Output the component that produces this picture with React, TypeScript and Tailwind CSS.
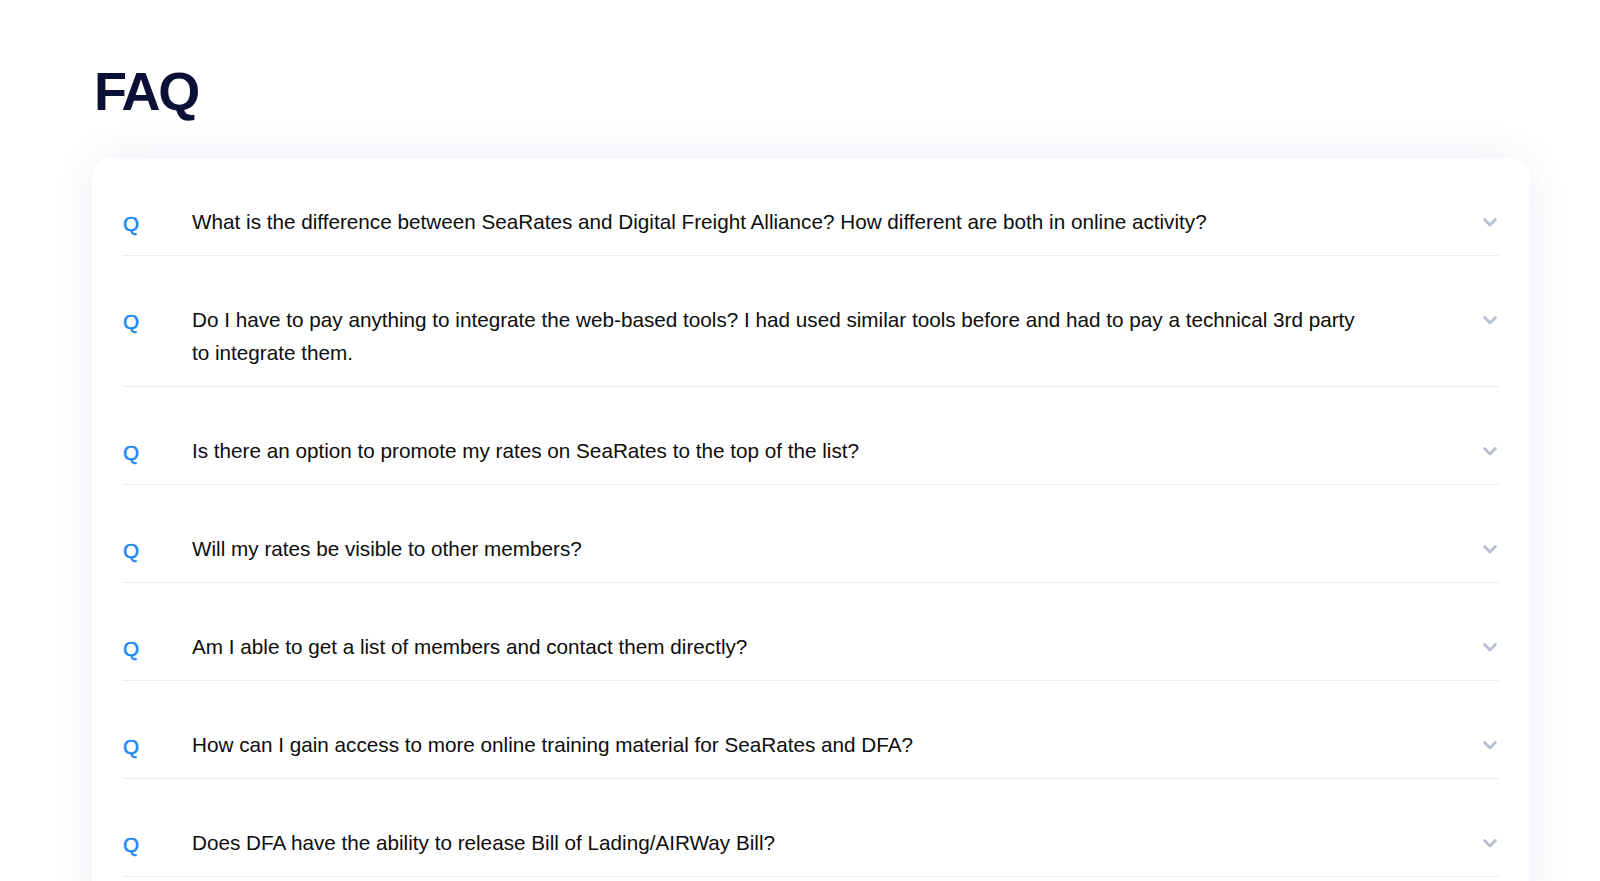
const questions = [
  'What is the difference between SeaRates and Digital Freight Alliance? How different are both in online activity?',
  'Do I have to pay anything to integrate the web-based tools? I had used similar tools before and had to pay a technical 3rd party to integrate them.',
  'Is there an option to promote my rates on SeaRates to the top of the list?',
  'Will my rates be visible to other members?',
  'Am I able to get a list of members and contact them directly?',
  'How can I gain access to more online training material for SeaRates and DFA?',
  'Does DFA have the ability to release Bill of Lading/AIRWay Bill?',
]

function Chevron() {
  return (
    <svg width="14" height="9" viewBox="0 0 14 9" fill="none" className="mt-[13px]">
      <polyline points="1.6,1.6 7,7 12.4,1.6" stroke="#b8bfd0" strokeWidth="2.8" strokeLinecap="round" strokeLinejoin="round" />
    </svg>
  )
}

function FaqRow({ text }: { text: string }) {
  return (
    <div className="flex items-start border-b border-[#e8edf5] pt-[47px] pb-[17px]">
      <span className="w-[69px] shrink-0 text-[20.7px] leading-[33px] text-[#1a86f5] translate-y-[2px] [-webkit-text-stroke:0.5px_#1a86f5]">Q</span>
      <p className="w-[1175px] text-[20.7px] leading-[33px] text-[#0d0d0d]">{text}</p>
      <div className="flex-1 flex justify-end pr-[2px]">
        <Chevron />
      </div>
    </div>
  )
}

export default function App() {
  return (
    <div className="h-[881px] overflow-hidden bg-white pl-[92px] pr-[70px] pt-[64px] font-['Liberation_Sans',Arial,sans-serif]">
      <h1 className="pl-[2px] text-[54px] leading-none font-bold tracking-[-0.045em] text-[#0b1136]">FAQ</h1>
      <div className="mt-[40px] bg-white rounded-[20px] shadow-[0_0_40px_rgba(40,70,150,0.09)] px-[31px] pb-8">
        {questions.map((q) => (
          <FaqRow key={q} text={q} />
        ))}
      </div>
    </div>
  )
}
